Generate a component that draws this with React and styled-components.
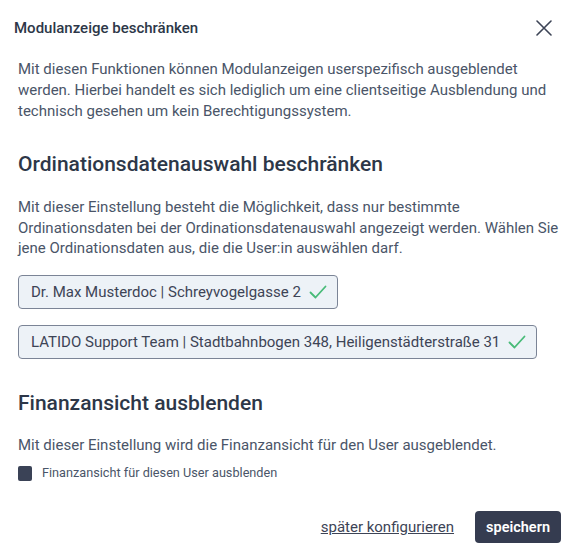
import styled, { createGlobalStyle } from "styled-components";

const GlobalStyle = createGlobalStyle`
  body {
    margin: 0;
    background: #ffffff;
    font-family: Roboto, "Liberation Sans", sans-serif;
    color: #2d3748;
  }
  * { box-sizing: border-box; }
`;

const locations = [
  "Dr. Max Musterdoc | Schreyvogelgasse 2",
  "LATIDO Support Team | Stadtbahnbogen 348, Heiligenstädterstraße 31",
];

function CloseIcon() {
  return (
    <svg width="16" height="16" viewBox="0 0 16 16" fill="none">
      <path d="M1 1L15 15M15 1L1 15" stroke="#3d4456" strokeWidth="1.6" strokeLinecap="round" />
    </svg>
  );
}

function CheckIcon() {
  return (
    <svg width="18" height="14" viewBox="0 0 18 14" fill="none">
      <path d="M1.5 7.5L6.5 12.5L16.5 1.5" stroke="#48bb78" strokeWidth="1.8" strokeLinecap="round" strokeLinejoin="round" />
    </svg>
  );
}

export default function App() {
  return (
    <>
      <GlobalStyle />
      <Modal>
        <Header>
          <Title>Modulanzeige beschränken</Title>
          <CloseButton aria-label="Schließen">
            <CloseIcon />
          </CloseButton>
        </Header>
        <Body>
          <Intro>
            Mit diesen Funktionen können Modulanzeigen userspezifisch ausgeblendet werden.
            Hierbei handelt es sich lediglich um eine clientseitige Ausblendung und technisch
            gesehen um kein Berechtigungssystem.
          </Intro>

          <SectionTitle>Ordinationsdatenauswahl beschränken</SectionTitle>
          <Text>
            Mit dieser Einstellung besteht die Möglichkeit, dass nur bestimmte Ordinationsdaten
            bei der Ordinationsdatenauswahl angezeigt werden. Wählen Sie jene Ordinationsdaten
            aus, die die User:in auswählen darf.
          </Text>
          <ChipList>
            {locations.map((loc) => (
              <Chip key={loc}>
                {loc}
                <CheckIcon />
              </Chip>
            ))}
          </ChipList>

          <SectionTitle $top={30}>Finanzansicht ausblenden</SectionTitle>
          <Text $top={18}>Mit dieser Einstellung wird die Finanzansicht für den User ausgeblendet.</Text>
          <CheckRow>
            <Box />
            Finanzansicht für diesen User ausblenden
          </CheckRow>
        </Body>
        <Footer>
          <LinkButton>später konfigurieren</LinkButton>
          <SaveButton>speichern</SaveButton>
        </Footer>
      </Modal>
    </>
  );
}

const Modal = styled.div`
  width: 574px;
  min-height: 557px;
  display: flex;
  flex-direction: column;
`;

const Header = styled.div`
  display: flex;
  align-items: center;
  justify-content: space-between;
  padding: 18px 22px 0 14px;
`;

const Title = styled.h1`
  margin: 0;
  font-size: 15px;
  line-height: 20px;
  font-weight: 500;
  color: #2d3748;
`;

const CloseButton = styled.button`
  border: none;
  background: none;
  padding: 0;
  display: flex;
  cursor: pointer;
`;

const Body = styled.div`
  padding: 0 12px 0 18px;
`;

const Intro = styled.p`
  margin: 21px 0 0;
  font-size: 15px;
  line-height: 21px;
  color: #4a5568;
`;

const SectionTitle = styled.h2`
  margin: ${(p) => p.$top ?? 28}px 0 0;
  font-size: 21px;
  line-height: 28px;
  font-weight: 500;
  color: #2d3748;
`;

const Text = styled.p`
  margin: ${(p) => p.$top ?? 19}px 0 0;
  font-size: 15px;
  line-height: 20.5px;
  color: #4a5568;
`;

const ChipList = styled.div`
  display: flex;
  flex-direction: column;
  align-items: flex-start;
  gap: 16px;
  margin-top: 16px;
`;

const Chip = styled.div`
  height: 34px;
  display: flex;
  align-items: center;
  gap: 8px;
  padding: 0 10px 0 12px;
  background: #edf2f7;
  border: 1px solid #7b8496;
  border-radius: 4px;
  font-size: 15px;
  color: #3d4456;
`;

const CheckRow = styled.label`
  display: flex;
  align-items: center;
  gap: 10px;
  margin-top: 10px;
  font-size: 12.7px;
  line-height: 16px;
  color: #4a5568;
`;

const Box = styled.span`
  width: 14px;
  height: 15px;
  border-radius: 2px;
  background: #3a4256;
`;

const Footer = styled.div`
  margin-top: auto;
  display: flex;
  justify-content: flex-end;
  align-items: center;
  gap: 21px;
  padding: 0 13px 14px 0;
`;

const LinkButton = styled.button`
  border: none;
  background: none;
  padding: 0;
  font-family: inherit;
  font-size: 15px;
  color: #3d4456;
  text-decoration: underline;
  cursor: pointer;
`;

const SaveButton = styled.button`
  height: 32px;
  padding: 0 11px;
  border: none;
  border-radius: 4px;
  background: #353c50;
  color: #ffffff;
  font-family: inherit;
  font-size: 14.5px;
  font-weight: 600;
  cursor: pointer;
`;
